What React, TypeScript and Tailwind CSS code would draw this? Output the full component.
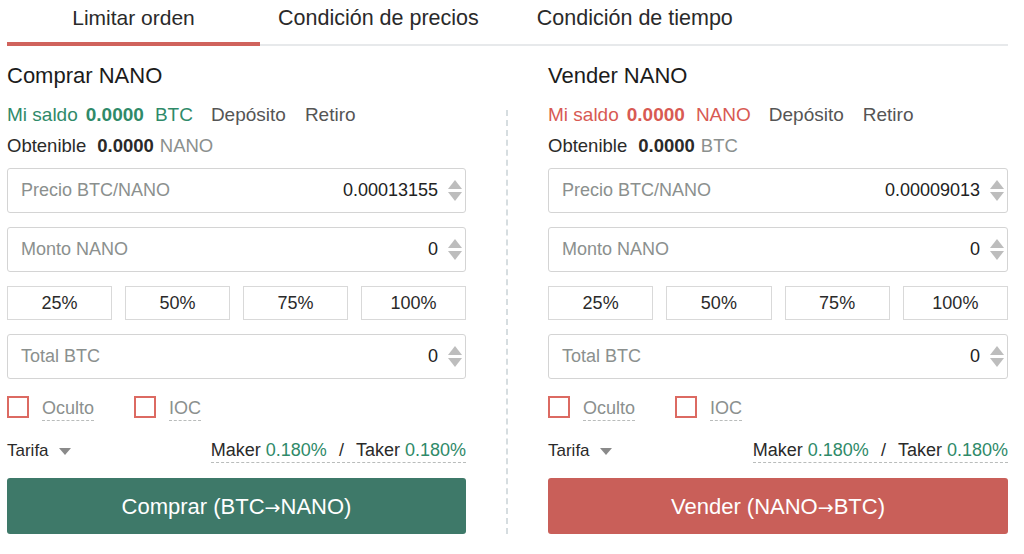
const GREEN_TXT = 'text-[#2f8a69]'

function Spinner() {
  return (
    <div className="flex flex-col gap-[3px] ml-[10px]">
      <svg width="14" height="9" viewBox="0 0 14 9"><path d="M7 0L14 9H0Z" fill="#bdbdbd" /></svg>
      <svg width="14" height="9" viewBox="0 0 14 9"><path d="M0 0H14L7 9Z" fill="#bdbdbd" /></svg>
    </div>
  )
}

function Field({ label, value }: { label: string; value: string }) {
  return (
    <div className="h-[45px] border border-[#d4d4d4] rounded-[3px] flex items-center pl-[13px] pr-[3px]">
      <span className="text-[18px] text-[#8b908e] flex-1">{label}</span>
      <span className="text-[18px] text-[#222]">{value}</span>
      <Spinner />
    </div>
  )
}

function Checkbox({ label }: { label: string }) {
  return (
    <div className="flex items-start gap-[13px]">
      <div className="w-[22px] h-[22px] border-2 border-[#dc6a62]" />
      <span className="text-[18px] leading-[24px] text-[#8b908e] border-b border-dashed border-[#b9bcbb]">{label}</span>
    </div>
  )
}

function Panel({ side }: { side: 'buy' | 'sell' }) {
  const buy = side === 'buy'
  const c = buy ? GREEN_TXT : 'text-[#d85a53]'
  return (
    <div className="flex flex-col">
      <h2 className="mt-[15px] h-[30px] leading-[30px] text-[22px] text-[#1b1b1b]">{buy ? 'Comprar NANO' : 'Vender NANO'}</h2>
      <div className="mt-[12px] h-[24px] flex items-center text-[19px]">
        <span className={c}>Mi saldo</span>
        <span className={`${c} font-bold ml-[8px]`}>0.0000</span>
        <span className={`${c} ml-[11px]`}>{buy ? 'BTC' : 'NANO'}</span>
        <span className="text-[#555] ml-[18px]">Depósito</span>
        <span className="text-[#555] ml-[19px]">Retiro</span>
      </div>
      <div className="mt-[7px] h-[24px] flex items-center text-[18.5px]">
        <span className="text-[#2a2a2a]">Obtenible</span>
        <span className="text-[#2a2a2a] font-bold ml-[11px]">0.0000</span>
        <span className="text-[#8b908e] ml-[6px]">{buy ? 'NANO' : 'BTC'}</span>
      </div>
      <div className="mt-[10px]">
        <Field label="Precio BTC/NANO" value={buy ? '0.00013155' : '0.00009013'} />
      </div>
      <div className="mt-[14px]">
        <Field label="Monto NANO" value="0" />
      </div>
      <div className="mt-[14px] grid grid-cols-4 gap-[13px]">
        {['25%', '50%', '75%', '100%'].map(p => (
          <div key={p} className="h-[34px] border border-[#d9d9d9] flex items-center justify-center text-[18px] text-[#2a2a2a]">{p}</div>
        ))}
      </div>
      <div className="mt-[14px]">
        <Field label="Total BTC" value="0" />
      </div>
      <div className="mt-[17px] h-[27px] flex gap-[40px]">
        <Checkbox label="Oculto" />
        <Checkbox label="IOC" />
      </div>
      <div className="mt-[16px] h-[24px] flex items-center justify-between text-[18px]">
        <div className="flex items-center text-[#2a2a2a] text-[17px]">
          Tarifa
          <svg className="ml-[10px]" width="12" height="7" viewBox="0 0 12 7"><path d="M0 0H12L6 7Z" fill="#8a8a8a" /></svg>
        </div>
        <div className="border-b border-dashed border-[#b9bcbb] text-[#2a2a2a] leading-[23px]">
          Maker <span className={GREEN_TXT}>0.180%</span>
          <span className="mx-[12px]">/</span>
          Taker <span className={GREEN_TXT}>0.180%</span>
        </div>
      </div>
      <button className={`mt-[15px] h-[56px] rounded-[3px] text-white text-[22px] ${buy ? 'bg-[#3e7969]' : 'bg-[#c95f59]'}`}>
        {buy ? 'Comprar (BTC' : 'Vender (NANO'}
        <span className="font-['DejaVu_Sans',sans-serif] text-[19px]">→</span>
        {buy ? 'NANO)' : 'BTC)'}
      </button>
    </div>
  )
}

export default function App() {
  return (
    <div className="w-[1024px] h-[554px] bg-white overflow-hidden font-['Liberation_Sans',Arial,sans-serif]">
      <div className="ml-[7px] mr-[16px] h-[46px] flex border-b-2 border-[#e7e9eb] text-[21px] text-[#2a2a2a]">
        <div className="w-[253px] h-[46px] -mb-[2px] border-b-4 border-[#d0635c] text-center pt-[2px]">Limitar orden</div>
        <div className="ml-[18px] pt-[2px] text-[21.5px]">Condición de precios</div>
        <div className="ml-[58px] pt-[2px] text-[21.5px]">Condición de tiempo</div>
      </div>
      <div className="grid grid-cols-[459px_82px_460px] pl-[7px]">
        <Panel side="buy" />
        <div className="flex justify-center pt-[64px]">
          <div className="border-l-2 border-dashed border-[#d6dde0] h-full" />
        </div>
        <Panel side="sell" />
      </div>
    </div>
  )
}
